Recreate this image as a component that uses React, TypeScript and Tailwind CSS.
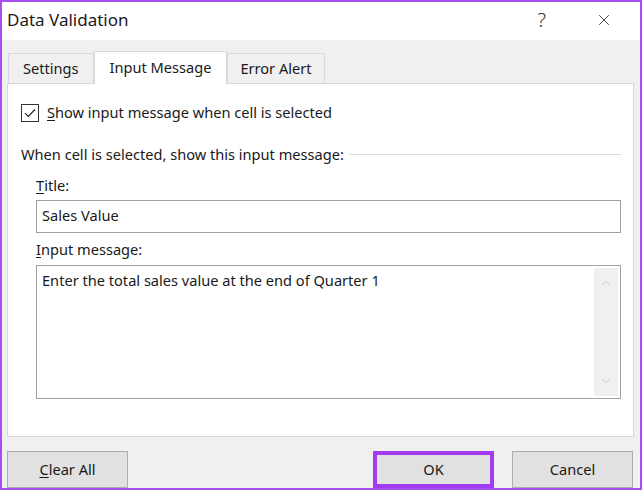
import { X, ChevronUp, ChevronDown } from 'lucide-react';

const font = { fontFamily: '"Segoe UI", "Noto Sans", sans-serif' };

function Tab({ label, active, pad }: { label: string; active?: boolean; pad: string }) {
  if (active) {
    return (
      <div className={'h-[33px] -mb-px flex items-center bg-white border border-[#d9d9d9] border-b-0 text-[14.6px] text-[#1a1a1a] relative z-10 ' + pad}>
        {label}
      </div>
    );
  }
  return (
    <div className={'h-[30px] flex items-center bg-[#f0f0f0] border border-[#d9d9d9] border-b-0 text-[14.6px] text-[#1a1a1a] ' + pad}>
      {label}
    </div>
  );
}

function Btn({ children, focus }: { children: React.ReactNode; focus?: boolean }) {
  return (
    <div
      className={
        'w-[121px] h-[37px] flex items-center justify-center bg-[#e1e1e1] text-[14.6px] text-[#1a1a1a] ' +
        (focus ? 'border-[4px] border-[#a23cf2]' : 'border border-[#adadad]')
      }
    >
      {children}
    </div>
  );
}

export default function App() {
  return (
    <div className="w-[642px] h-[490px] border-2 border-[#a64ff0] bg-[#f0f0f0] flex flex-col overflow-hidden" style={font}>
      {/* title bar */}
      <div className="h-[38px] bg-white flex items-center pl-[5px] pr-[27px] pb-[3px] shrink-0">
        <span className="text-[17px] text-[#1a1a1a] flex-1">Data Validation</span>
        <span className="text-[20px] text-[#333] mr-[49px] font-light">?</span>
        <X className="w-[18px] h-[18px] text-[#333]" strokeWidth={1.2} />
      </div>

      {/* tabs */}
      <div className="flex items-end pl-[6px] mt-[11px]">
        <Tab label="Settings" pad="px-[14px]" />
        <Tab label="Input Message" active pad="px-[15px]" />
        <Tab label="Error Alert" pad="px-[12px]" />
      </div>

      {/* panel */}
      <div className="ml-[5px] mr-[6px] h-[354px] bg-white border border-[#d9d9d9] pl-[13px] pr-[12px] pt-[18px] text-[14.6px] text-[#1a1a1a]">
        <div className="flex items-center gap-[8px]">
          <div className="w-[18px] h-[18px] border border-[#333] bg-white flex items-center justify-center">
            <svg width="14" height="14" viewBox="0 0 14 14" fill="none">
              <path d="M2 7.2 L5.3 10.5 L12 3.5" stroke="#222" strokeWidth="1.2" />
            </svg>
          </div>
          <span>
            <span className="underline underline-offset-2">S</span>how input message when cell is selected
          </span>
        </div>

        <div className="flex items-center mt-[20px]">
          <span>When cell is selected, show this input message:</span>
          <div className="flex-1 h-px bg-[#dcdcdc] ml-[5px]" />
        </div>

        <div className="pl-[15px]">
          <div className="mt-[9px]">
            <span className="underline underline-offset-2">T</span>itle:
          </div>
          <div className="mt-[3px] h-[33px] border border-[#a0a0a0] bg-white flex items-center pl-[5px]">
            Sales Value
          </div>

          <div className="mt-[6px]">
            <span className="underline underline-offset-2">I</span>nput message:
          </div>
          <div className="mt-[4px] h-[134px] border border-[#a0a0a0] bg-white flex">
            <div className="flex-1 pl-[5px] pt-[4px]">Enter the total sales value at the end of Quarter 1</div>
            <div className="w-[24px] mr-[2px] my-[2px] bg-[#f0f0f0] flex flex-col items-center justify-between py-[8px]">
              <ChevronUp className="w-[14px] h-[14px] text-[#c2c2c2]" strokeWidth={1.5} />
              <ChevronDown className="w-[14px] h-[14px] text-[#c2c2c2]" strokeWidth={1.5} />
            </div>
          </div>
        </div>
      </div>

      {/* buttons */}
      <div className="flex mt-[14px] pl-[5px] pr-[7px]">
        <Btn>
          <span>
            <span className="underline underline-offset-2">C</span>lear All
          </span>
        </Btn>
        <div className="flex-1" />
        <Btn focus>OK</Btn>
        <div className="w-[18px]" />
        <Btn>Cancel</Btn>
      </div>
    </div>
  );
}
